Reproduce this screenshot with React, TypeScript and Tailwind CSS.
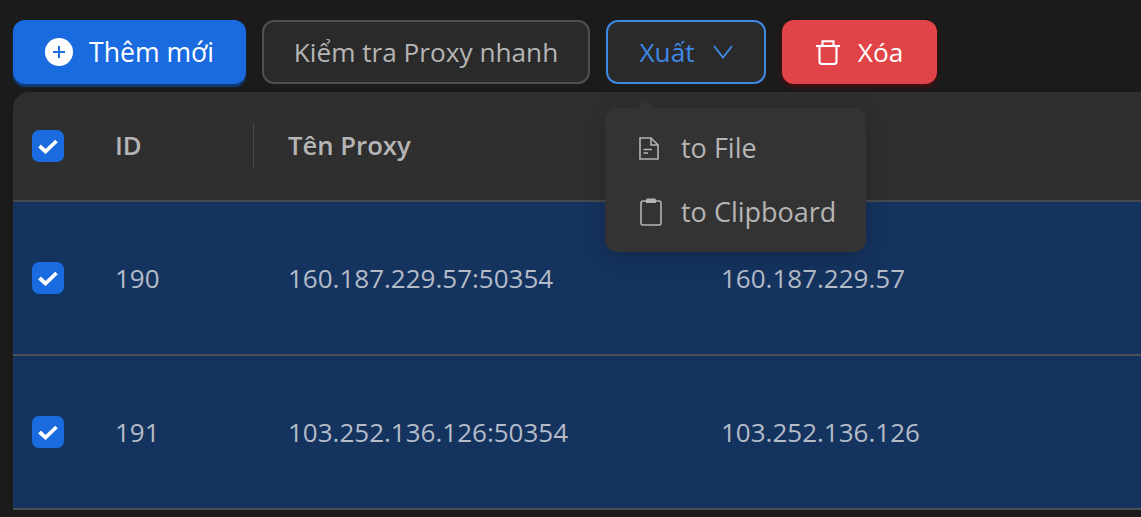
import { FC } from 'react';

const rows = [
    { id: 190, name: '160.187.229.57:50354', host: '160.187.229.57' },
    { id: 191, name: '103.252.136.126:50354', host: '103.252.136.126' },
];

const CheckBox: FC = () => (
    <span className="flex h-8 w-8 items-center justify-center rounded-[7px] bg-[#1a6ae0]">
        <svg width="20" height="16" viewBox="0 0 20 16" fill="none">
            <path d="M1.5 8 L7.5 13.5 L18.5 3" stroke="#fff" strokeWidth="3.8" />
        </svg>
    </span>
);

const PlusCircle: FC = () => (
    <span className="flex h-7 w-7 items-center justify-center rounded-full bg-white">
        <svg width="12" height="12" viewBox="0 0 12 12" fill="none">
            <path d="M6 0 V12 M0 6 H12" stroke="#1a6ae0" strokeWidth="2" />
        </svg>
    </span>
);

const Chevron: FC = () => (
    <svg width="20" height="14" viewBox="0 0 20 14" fill="none" stroke="currentColor" strokeWidth="1.9">
        <path d="M1 1 L10 12.5 L19 1" />
    </svg>
);

const TrashIcon: FC = () => (
    <svg width="24" height="25" viewBox="0 0 24 25" fill="none" stroke="currentColor" strokeWidth="2.1">
        <path d="M0 6 H24" />
        <path d="M6.5 6 V1.2 H17.5 V6" />
        <path d="M3.5 6 V21.5 Q3.5 24 6 24 H18 Q20.5 24 20.5 21.5 V6" />
    </svg>
);

const FileIcon: FC = () => (
    <svg width="20" height="23" viewBox="0 0 20 23" fill="none" stroke="currentColor" strokeWidth="1.6">
        <path d="M1 1 H12 L19 8 V22 H1 Z" />
        <path d="M12 1 V8 H19" />
        <path d="M4.5 12.5 H13 M4.5 16 H9" />
    </svg>
);

const ClipboardIcon: FC = () => (
    <svg width="22" height="28" viewBox="0 0 22 28" fill="none" stroke="currentColor" strokeWidth="1.6">
        <path d="M6 3 H3 Q1 3 1 5 V25 Q1 27 3 27 H19 Q21 27 21 25 V5 Q21 3 19 3 H16" />
        <path d="M6 5 V2 Q6 0.5 7.5 0.5 H14.5 Q16 0.5 16 2 V5 Z" fill="currentColor" stroke="none" />
    </svg>
);

export default function App() {
    return (
        <div className="relative h-[517px] w-[1141px] overflow-hidden bg-[#1b1b1b] pl-[13px] pt-5 font-['Open_Sans',sans-serif] text-[26px] text-[#b5b5b5]">
            <div className="flex h-16 gap-4 text-[26.2px] leading-[42px]">
                <button className="flex w-[233px] items-center justify-center gap-4 rounded-xl bg-[#1a6ae0] text-[26.6px] text-white shadow-[0_3px_2px_#123d7c]">
                    <PlusCircle />
                    Thêm mới
                </button>
                <button className="flex w-[328px] items-center justify-center rounded-xl border-2 border-[#505050] bg-[#2a2a2a]">
                    Kiểm tra Proxy nhanh
                </button>
                <button className="flex w-[160px] items-center justify-center gap-[18px] rounded-xl border-2 border-[#3f88e6] bg-[#2a2a2a] text-[#3f88e6]">
                    Xuất
                    <Chevron />
                </button>
                <button className="flex w-[155px] items-center justify-center gap-[18px] rounded-xl bg-[#e04448] text-white shadow-[0_3px_5px_#4a1010]">
                    <TrashIcon />
                    Xóa
                </button>
            </div>

            <div className="mt-2 overflow-hidden rounded-tl-2xl">
                <div className="flex h-[110px] items-center border-b-2 border-[#4a4a4a] bg-[#2f2f2f] text-[25.7px] font-semibold leading-[44px]">
                    <div className="w-[102px] pl-[19px]">
                        <CheckBox />
                    </div>
                    <div className="flex w-[173px] items-center justify-between pr-[34px]">
                        ID
                        <span className="h-11 w-px bg-[#4a4a4a]" />
                    </div>
                    <div>Tên Proxy</div>
                </div>
                {rows.map((r) => (
                    <div
                        key={r.id}
                        className="flex h-[154px] items-center border-b-2 border-[#4a4f58] bg-[#15335f] text-[#b4bcc8]"
                    >
                        <div className="w-[102px] pl-[19px]">
                            <CheckBox />
                        </div>
                        <div className="w-[173px]">{r.id}</div>
                        <div className="w-[433px]">{r.name}</div>
                        <div>{r.host}</div>
                    </div>
                ))}
            </div>

            {/* dropdown */}
            <div className="absolute left-[605px] top-[108px] h-[144px] w-[261px] rounded-xl bg-[#333333] py-2 text-[27px] leading-[44px] shadow-[0_6px_24px_rgba(0,0,0,0.2)]">
                <span className="absolute -top-[6px] left-[34px] h-3 w-3 rotate-45 bg-[#333333]" />
                <div className="flex h-16 items-center">
                    <span className="flex w-[76px] justify-end pr-[22px]">
                        <FileIcon />
                    </span>
                    to File
                </div>
                <div className="flex h-16 items-center">
                    <span className="flex w-[76px] justify-end pr-[19px]">
                        <ClipboardIcon />
                    </span>
                    to Clipboard
                </div>
            </div>
        </div>
    );
}
